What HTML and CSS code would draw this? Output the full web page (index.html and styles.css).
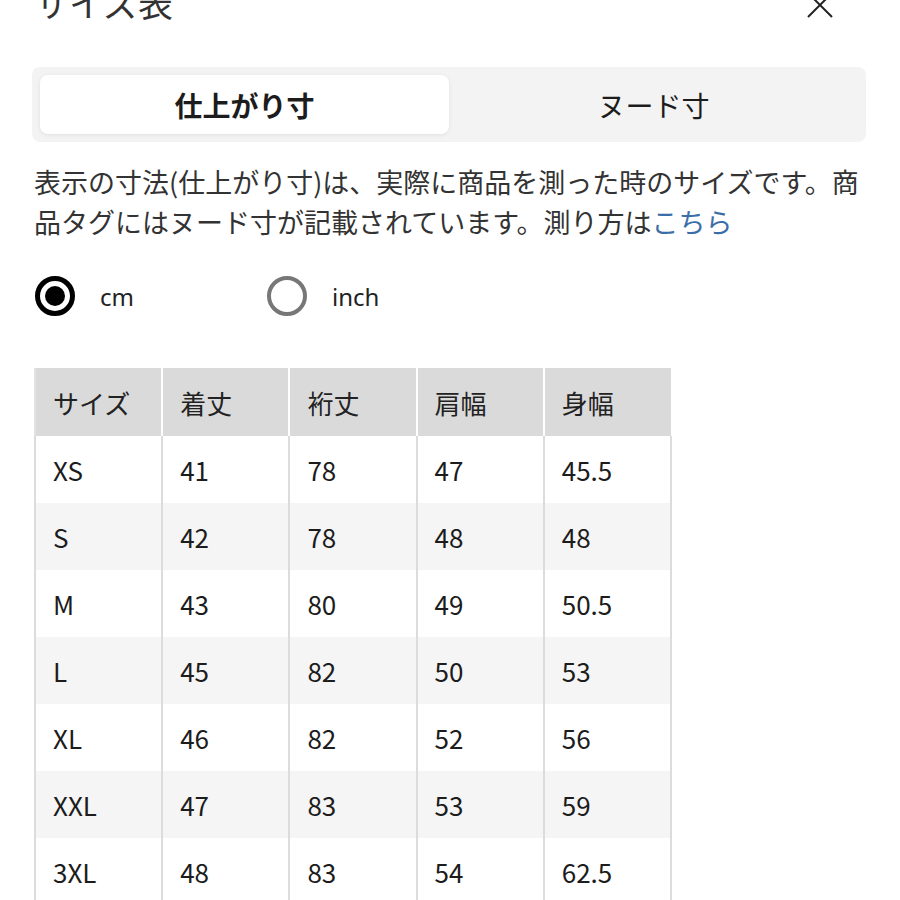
FILE: index.html
```html
<!DOCTYPE html>
<html lang="ja">
<head>
<meta charset="utf-8">
<link rel="stylesheet" href="styles.css">
</head>
<body>
<div class="page">
  <header class="head">
    <h1 class="title">サイズ表</h1>
    <button class="close" aria-label="閉じる">
      <svg width="26" height="26" viewBox="0 0 26 26"><path d="M1 1 L25 25 M25 1 L1 25" stroke="#222" stroke-width="2" fill="none"/></svg>
    </button>
  </header>

  <div class="seg">
    <div class="seg-item active">仕上がり寸</div>
    <div class="seg-item">ヌード寸</div>
  </div>

  <p class="desc">表示の寸法(仕上がり寸)は、実際に商品を測った時のサイズです。商品タグにはヌード寸が記載されています。測り方は<a class="link" href="#">こちら</a></p>

  <div class="units">
    <label class="unit"><span class="radio checked"></span><span class="unit-label">cm</span></label>
    <label class="unit"><span class="radio"></span><span class="unit-label">inch</span></label>
  </div>

  <table class="sizes">
    <thead>
      <tr><th>サイズ</th><th>着丈</th><th>裄丈</th><th>肩幅</th><th>身幅</th></tr>
    </thead>
    <tbody>
      <tr><td>XS</td><td>41</td><td>78</td><td>47</td><td>45.5</td></tr>
      <tr><td>S</td><td>42</td><td>78</td><td>48</td><td>48</td></tr>
      <tr><td>M</td><td>43</td><td>80</td><td>49</td><td>50.5</td></tr>
      <tr><td>L</td><td>45</td><td>82</td><td>50</td><td>53</td></tr>
      <tr><td>XL</td><td>46</td><td>82</td><td>52</td><td>56</td></tr>
      <tr><td>XXL</td><td>47</td><td>83</td><td>53</td><td>59</td></tr>
      <tr><td>3XL</td><td>48</td><td>83</td><td>54</td><td>62.5</td></tr>
    </tbody>
  </table>
</div>
</body>
</html>
```
FILE: styles.css
```css
html, body {
  margin: 0;
  padding: 0;
  background: #fff;
  overflow: hidden;
}
body {
  font-family: "Noto Sans CJK JP", "Noto Sans", sans-serif;
  color: #1c1c1c;
}
.page {
  padding: 0 34px 0 34px;
  width: 832px;
}
.head {
  display: flex;
  justify-content: space-between;
  align-items: center;
  margin-top: -22px;
  height: 48px;
}
.title {
  margin: 0;
  font-size: 35px;
  font-weight: 400;
  line-height: 48px;
  color: #333;
}
.close {
  border: 0;
  background: none;
  padding: 0;
  width: 26px;
  height: 26px;
  transform: translate(-33px, 3px);
}
.seg {
  margin-top: 41px;
  margin-left: -2px;
  width: 818px;
  display: flex;
  background: #f3f3f3;
  border-radius: 8px;
  padding: 8px;
  height: 59px;
}
.seg-item {
  flex: 1;
  display: flex;
  align-items: center;
  justify-content: center;
  font-size: 28px;
  color: #1c1c1c;
}
.seg-item.active {
  background: #fff;
  border-radius: 8px;
  font-weight: 700;
  box-shadow: 0 1px 4px rgba(0,0,0,0.08);
}
.desc {
  margin: 20px 0 0 0;
  font-size: 27px;
  line-height: 40px;
  color: #333;
}
.link {
  color: #3b6ea8;
  text-decoration: none;
}
.units {
  margin-top: 34px;
  display: flex;
  align-items: center;
  height: 40px;
}
.unit {
  display: flex;
  align-items: center;
  width: 232px;
}
.radio {
  width: 40px;
  height: 40px;
  box-sizing: border-box;
  border-radius: 50%;
  border: 4px solid #777;
  margin-left: 1px;
  position: relative;
}
.radio.checked {
  border: 5px solid #000;
}
.radio.checked::after {
  content: "";
  position: absolute;
  left: 5px;
  top: 5px;
  width: 20px;
  height: 20px;
  border-radius: 50%;
  background: #000;
}
.unit-label {
  margin-left: 25px;
  font-size: 24px;
  color: #222;
  font-family: "Noto Sans", "Noto Sans CJK JP", sans-serif;
}
.sizes {
  margin-top: 52px;
  border-collapse: collapse;
  width: 638px;
  table-layout: fixed;
  font-size: 26px;
}
.sizes th, .sizes td {
  text-align: left;
  padding: 0 0 0 17px;
  font-weight: 400;
}
.sizes th {
  background: #dadada;
  height: 68px;
  border-left: 2px solid #fff;
  color: #222;
}
.sizes th:first-child {
  border-left: 2px solid #e2e2e2;
}
.sizes td {
  height: 67px;
  border-left: 2px solid #dcdcdc;
  border-right: 2px solid #dcdcdc;
}
.sizes tbody tr:nth-child(even) td {
  background: #f5f5f5;
}
```
